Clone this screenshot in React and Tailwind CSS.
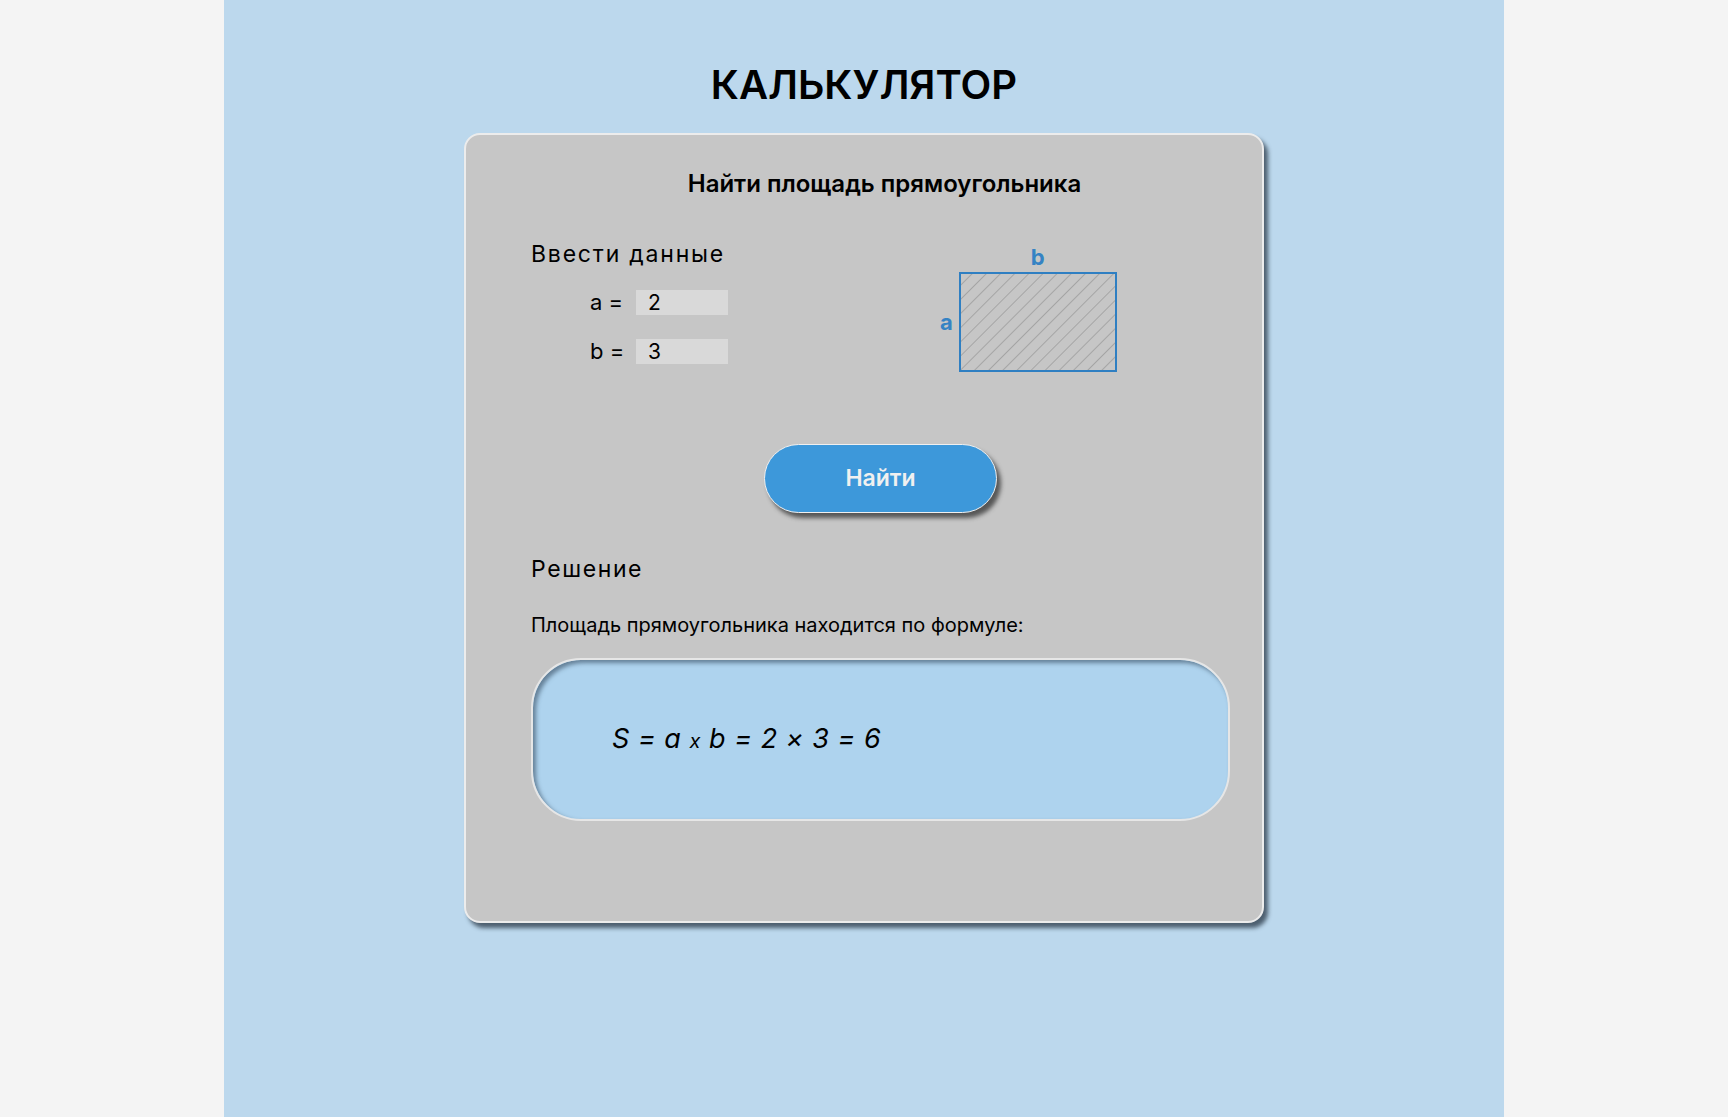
import React from "react";

function Diagram() {
  return (
    <div className="flex flex-col items-end">
      <div className="w-[158px] text-center text-[22px] leading-[26px] font-bold text-[#3583c4]">b</div>
      <div className="flex items-center gap-[6px] mt-[2px]">
        <span className="text-[22px] leading-[26px] font-bold text-[#3583c4]">a</span>
        <svg width="158" height="100" viewBox="0 0 158 100">
          <defs>
            <pattern id="hatch" width="10" height="10" patternUnits="userSpaceOnUse" patternTransform="rotate(45)">
              <line x1="0" y1="0" x2="0" y2="10" stroke="#8e8e8e" strokeWidth="1.2" />
            </pattern>
          </defs>
          <rect x="1" y="1" width="156" height="98" fill="#c6c6c6" />
          <rect x="1" y="1" width="156" height="98" fill="url(#hatch)" />
          <rect x="1" y="1" width="156" height="98" fill="none" stroke="#2f7fc2" strokeWidth="2" />
        </svg>
      </div>
    </div>
  );
}

export default function App() {
  return (
    <div className="min-h-screen bg-[#f4f4f4]" style={{ fontFamily: "Inter, 'Noto Sans', sans-serif" }}>
      <div className="mx-auto w-[1280px] min-h-[1117px] bg-[#bcd8ed] flex flex-col items-center">
        <h1 className="mt-[61px] text-[40px] leading-[48px] font-semibold text-black">КАЛЬКУЛЯТОР</h1>
        <div className="mt-[24px] w-[800px] h-[790px] rounded-[16px] border-2 border-[#ececec] bg-[#c6c6c6] shadow-[4px_5px_4px_rgba(40,55,70,0.75)] pl-[65px] pr-[32px] pt-[34px] text-black">
          <div className="text-center text-[24px] leading-[30px] font-semibold pl-[8px]">Найти площадь прямоугольника</div>
          <div className="mt-[39px] flex">
            <div className="w-[400px]">
              <div className="mt-[2px] text-[23px] leading-[28px] tracking-[1.8px]">Ввести данные</div>
              <div className="mt-[22px] pl-[59px] flex flex-col gap-[24px]">
                <div className="flex items-center h-[25px]">
                  <span className="w-[46px] text-[22px] leading-[25px]">a =</span>
                  <div className="w-[92px] h-[25px] bg-[#d9d9d9] pl-[12px] text-[21px] leading-[25px]">2</div>
                </div>
                <div className="flex items-center h-[25px]">
                  <span className="w-[46px] text-[22px] leading-[25px]">b =</span>
                  <div className="w-[92px] h-[25px] bg-[#d9d9d9] pl-[12px] text-[21px] leading-[25px]">3</div>
                </div>
              </div>
            </div>
            <div className="ml-[9px] mt-[6px]">
              <Diagram />
            </div>
          </div>
          <div className="mt-[72px] flex justify-center">
            <button className="w-[233px] h-[69px] rounded-full bg-[#3d98da] border border-[#f0f0f0] shadow-[4px_5px_4px_rgba(40,40,40,0.7)] text-[23px] font-semibold text-[#f0f0f0]">
              Найти
            </button>
          </div>
          <div className="mt-[42px] text-[23px] leading-[28px] tracking-[1.6px]">Решение</div>
          <div className="mt-[30px] text-[20px] leading-[24px]">Площадь прямоугольника находится по формуле:</div>
          <div className="mt-[21px] h-[163px] rounded-[50px] border-2 border-[#e6e6e6] bg-[#aed3ee] shadow-[inset_3px_3px_4px_rgba(40,60,80,0.55)] flex items-center pl-[79px]">
            <span className="italic text-[27px] leading-[32px] tracking-[0.5px]">
              S = a <span className="text-[20px]">x</span> b = 2 × 3 = 6
            </span>
          </div>
        </div>
      </div>
    </div>
  );
}
